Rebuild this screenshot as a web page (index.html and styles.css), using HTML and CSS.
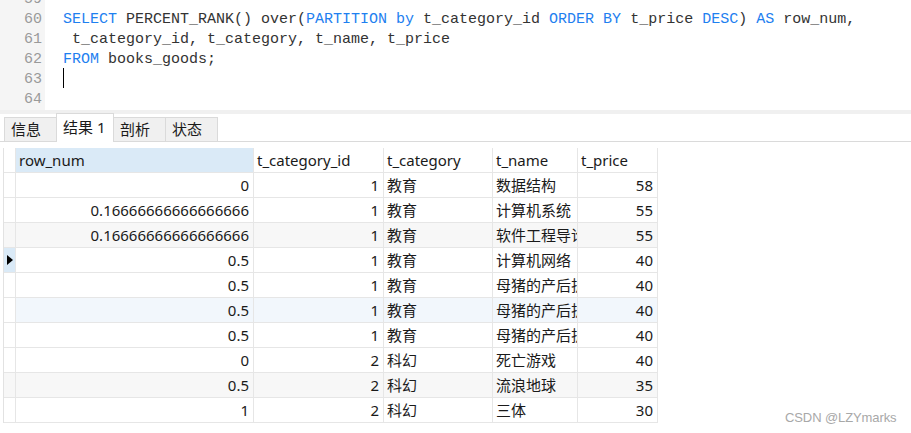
FILE: index.html
```html
<!DOCTYPE html>
<html lang="zh-CN">
<head>
<meta charset="utf-8">
<title>Navicat - 结果 1</title>
<link rel="stylesheet" href="styles.css">
</head>
<body>
<div class="editor">
  <div class="gutter">
    <div class="ln">59</div>
    <div class="ln">60</div>
    <div class="ln">61</div>
    <div class="ln">62</div>
    <div class="ln">63</div>
    <div class="ln">64</div>
  </div>
  <div class="code">
    <div class="line"></div>
    <div class="line"><span class="kw">SELECT</span> PERCENT_RANK() over(<span class="kw">PARTITION by</span> t_category_id <span class="kw">ORDER BY</span> t_price <span class="kw">DESC</span>) <span class="kw">AS</span> row_num,</div>
    <div class="line"> t_category_id, t_category, t_name, t_price</div>
    <div class="line"><span class="kw">FROM</span> books_goods;</div>
    <div class="line"><span class="caret"></span></div>
    <div class="line"></div>
  </div>
</div>
<div class="splitter"></div>
<div class="tabs">
  <div class="tab">信息</div>
  <div class="tab active">结果 1</div>
  <div class="tab">剖析</div>
  <div class="tab">状态</div>
  <div class="tab-fill"></div>
</div>
<div class="grid-wrap">
  <div class="grid">
    <div class="c ind hd"></div><div class="c hd sel">row_num</div><div class="c hd">t_category_id</div><div class="c hd">t_category</div><div class="c hd">t_name</div><div class="c hd">t_price</div>

    <div class="c ind"></div><div class="c r">0</div><div class="c r">1</div><div class="c">教育</div><div class="c">数据结构</div><div class="c r">58</div>
    <div class="c ind"></div><div class="c r">0.16666666666666666</div><div class="c r">1</div><div class="c">教育</div><div class="c">计算机系统</div><div class="c r">55</div>
    <div class="c ind alt"></div><div class="c r alt">0.16666666666666666</div><div class="c r alt">1</div><div class="c alt">教育</div><div class="c alt">软件工程导论</div><div class="c r alt">55</div>
    <div class="c ind cur"><span class="tri"></span></div><div class="c r">0.5</div><div class="c r">1</div><div class="c">教育</div><div class="c">计算机网络</div><div class="c r">40</div>
    <div class="c ind"></div><div class="c r">0.5</div><div class="c r">1</div><div class="c">教育</div><div class="c">母猪的产后护理</div><div class="c r">40</div>
    <div class="c ind"></div><div class="c r hov">0.5</div><div class="c r hov">1</div><div class="c hov">教育</div><div class="c hov">母猪的产后护理</div><div class="c r hov">40</div>
    <div class="c ind"></div><div class="c r">0.5</div><div class="c r">1</div><div class="c">教育</div><div class="c">母猪的产后护理</div><div class="c r">40</div>
    <div class="c ind"></div><div class="c r">0</div><div class="c r">2</div><div class="c">科幻</div><div class="c">死亡游戏</div><div class="c r">40</div>
    <div class="c ind alt"></div><div class="c r alt">0.5</div><div class="c r alt">2</div><div class="c alt">科幻</div><div class="c alt">流浪地球</div><div class="c r alt">35</div>
    <div class="c ind"></div><div class="c r">1</div><div class="c r">2</div><div class="c">科幻</div><div class="c">三体</div><div class="c r">30</div>
  </div>
</div>
<div class="watermark">CSDN @LZYmarks</div>
</body>
</html>
```

FILE: styles.css
```css
html, body {
  margin: 0;
  padding: 0;
  background: #ffffff;
}
body {
  width: 911px;
  height: 433px;
  overflow: hidden;
  position: relative;
  font-family: "Noto Sans", "Noto Sans CJK SC", sans-serif;
  font-size: 15px;
  color: #1a1a1a;
}

/* ---------- editor ---------- */
.editor {
  display: flex;
  height: 110px;
  overflow: hidden;
}
.gutter {
  width: 42px;
  padding-right: 3px;
  background: #f5f5f5;
  text-align: right;
  margin-top: -10px;
  color: #9a9a9a;
  font-family: "Liberation Mono", "DejaVu Sans Mono", monospace;
  font-size: 15px;
}
.ln {
  height: 20px;
  line-height: 20px;
}
.code {
  margin-top: -10px;
  padding-left: 18px;
  font-family: "Liberation Mono", "DejaVu Sans Mono", monospace;
  font-size: 15px;
  color: #333333;
}
.line {
  height: 20px;
  line-height: 20px;
  white-space: pre;
}
.kw {
  color: #1e80f0;
}
.caret {
  display: inline-block;
  width: 1px;
  height: 20px;
  background: #000;
  vertical-align: top;
  margin-top: -2px;
}

/* ---------- splitter & tabs ---------- */
.splitter {
  height: 4px;
  background: #f0f0f0;
}
.tabs {
  display: flex;
  align-items: flex-end;
  height: 27px;
  padding-left: 4px;
  border-bottom: 1px solid #dadada;
}
.tab {
  height: 23px;
  line-height: 23px;
  padding: 0 0 0 6px;
  width: 45px;
  background: #f0f0f0;
  border: 1px solid #dadada;
  border-bottom: none;
  border-right: none;
  font-size: 15px;
  color: #1a1a1a;
}
.tab:nth-child(4) {
  border-right: 1px solid #dadada;
}
.tab.active {
  line-height: 26px;
  width: 50px;
  background: #ffffff;
  border-right: 1px solid #dadada;
  margin-bottom: -1px;
  height: 28px;
}
.tab.active + .tab {
  border-left: none;
}
.tab-fill {
  flex: 1;
}

/* ---------- grid ---------- */
.grid-wrap {
  padding: 6px 0 0 3px;
}
.grid {
  display: grid;
  grid-template-columns: 12px 238px 130px 109px 85px 80px;
  grid-auto-rows: 25px;
  width: max-content;
  border-left: 1px solid #e2e2e2;
}
.c {
  box-sizing: border-box;
  border-right: 1px solid #e6e6e6;
  border-bottom: 1px solid #e6e6e6;
  padding: 0 3px;
  line-height: 24px;
  white-space: nowrap;
  overflow: hidden;
  text-overflow: clip;
}
.c.r {
  text-align: right;
  padding-right: 4px;
}
.c.ind {
  padding: 0;
  position: relative;
}
.c.sel {
  background: #daeaf7;
}
.c.alt {
  background: #f7f7f7;
}
.c.hov {
  background: #f2f7fc;
}
.c.cur {
  background: #daeaf7;
}
.tri {
  position: absolute;
  left: 3px;
  top: 7px;
  width: 0;
  height: 0;
  border-top: 5px solid transparent;
  border-bottom: 5px solid transparent;
  border-left: 6px solid #000;
}

/* ---------- watermark ---------- */
.watermark {
  position: absolute;
  left: 785px;
  top: 410px;
  font-family: "Liberation Sans", Arial, sans-serif;
  font-size: 13px;
  color: #a8a8a8;
  letter-spacing: -0.1px;
}
```
